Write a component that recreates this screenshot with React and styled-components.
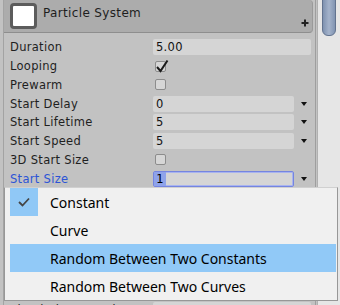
import React from "react";
import styled, { createGlobalStyle } from "styled-components";

const Global = createGlobalStyle`
  html, body { margin: 0; padding: 0; }
  body {
    width: 340px; height: 305px; overflow: hidden;
    background: #c2c2c2;
    font-family: "DejaVu Sans", "Liberation Sans", sans-serif;
  }
`;

const Page = styled.div`
  position: relative;
  display: flex;
  width: 340px;
  height: 305px;
  overflow: hidden;
  background: #c2c2c2;
`;

const Inspector = styled.div`
  display: flex;
  flex-direction: column;
  width: 313px;
  margin-left: 3px;
  border-left: 1px solid #a3a3a3;
  border-right: 1px solid #9e9e9e;
`;

const Header = styled.div`
  position: relative;
  display: flex;
  align-items: flex-start;
  height: 33px;
  flex: none;
  padding: 3px 0 0 6px;
  box-sizing: border-box;
  margin-right: 2px;
  background: #acacac;
  border-bottom: 1px solid #8e8e8e;
  border-right: 1px solid #9a9a9a;
  border-radius: 0 4px 4px 0;
`;

const IconBox = styled.div`
  width: 27px;
  height: 26px;
  box-sizing: border-box;
  border: 3px solid #5c5c5c;
  border-radius: 4px;
  background: #ffffff;
`;

const Title = styled.div`
  margin: 3px 0 0 6px;
  font-size: 12px;
  line-height: 14px;
  color: #1e1e1e;
  letter-spacing: 0.35px;
`;

const Plus = styled.svg`
  position: absolute;
  right: 3px;
  bottom: 5px;
`;

const Rows = styled.div`
  display: flex;
  flex-direction: column;
  padding-top: 5px;
`;

const Row = styled.div`
  display: flex;
  align-items: center;
  height: 18.75px;
  flex: none;
  padding-left: 6px;
  visibility: ${(p) => (p.$covered ? "hidden" : "visible")};
`;

const Label = styled.div`
  width: 143px;
  flex: none;
  font-size: 11.5px;
  letter-spacing: 0.3px;
  color: ${(p) => (p.$active ? "#2c54d6" : "#1f1f1f")};
  white-space: nowrap;
`;

const Field = styled.div`
  display: flex;
  align-items: center;
  box-sizing: border-box;
  width: ${(p) => (p.$wide ? "158px" : "141px")};
  height: 16px;
  padding-left: ${(p) => (p.$focus ? "0" : "3px")};
  background: #d5d5d5;
  border-radius: 2px;
  border: ${(p) => (p.$focus ? "1px solid #7585e0" : "none")};
  box-shadow: ${(p) => (p.$focus ? "inset 0 0 0 1px #a9b4ef" : "none")};
  font-size: 11.5px;
  letter-spacing: 0.3px;
  color: #111;
`;

const Selected = styled.span`
  display: inline-flex;
  align-items: center;
  justify-content: center;
  width: 12px;
  height: 14px;
  background: #8fa3ea;
  color: #000;
  font-size: 11.5px;
`;

const Arrow = styled.div`
  width: 0;
  height: 0;
  margin-left: 7px;
  border-left: 3.5px solid transparent;
  border-right: 3.5px solid transparent;
  border-top: 4px solid #111;
`;

const CheckBox = styled.div`
  position: relative;
  width: 11px;
  height: 11px;
  margin-left: 2px;
  box-sizing: border-box;
  border: 1px solid #8c8c8c;
  border-radius: 2px;
  background: #d6d6d6;
`;

const CheckMark = styled.svg`
  position: absolute;
  left: -1px;
  top: -3px;
`;

const Scrollbar = styled.div`
  display: flex;
  justify-content: center;
  width: 22px;
  margin-left: 1px;
  background: #e6e6e6;
  border-left: 1px solid #b0b0b0;
`;

const Thumb = styled.div`
  width: 14px;
  height: 40px;
  margin-top: -4px;
  box-sizing: border-box;
  border: 1px solid #62738f;
  border-radius: 0 0 6px 6px;
  background: linear-gradient(to right, #7f92b0, #a4b3cb 50%, #8194b2);
`;

const Popup = styled.div`
  position: absolute;
  left: 4px;
  top: 187px;
  width: 334px;
  height: 114px;
  box-sizing: border-box;
  padding: 0 1px 0 5px;
  background: #f0f0f0;
  border: 1px solid #979797;
  border-top-color: #d0d0d0;
  display: flex;
  flex-direction: column;
`;

const Item = styled.div`
  display: flex;
  align-items: center;
  height: 28px;
  flex: none;
  background: ${(p) => (p.$hover ? "#91c9f7" : "transparent")};
  font-family: "Noto Sans", "Liberation Sans", sans-serif;
  font-size: 14px;
  color: #000;
`;

const Tick = styled.div`
  display: flex;
  align-items: center;
  justify-content: center;
  width: 28px;
  height: 28px;
  flex: none;
  background: ${(p) => (p.$on ? "#90c8f6" : "transparent")};
`;

const ItemText = styled.span`
  margin-left: 12px;
  white-space: nowrap;
`;

const rows = [
  { label: "Duration", kind: "wide", value: "5.00" },
  { label: "Looping", kind: "check", on: true },
  { label: "Prewarm", kind: "check" },
  { label: "Start Delay", kind: "drop", value: "0" },
  { label: "Start Lifetime", kind: "drop", value: "5" },
  { label: "Start Speed", kind: "drop", value: "5" },
  { label: "3D Start Size", kind: "check" },
  { label: "Start Size", kind: "focus", value: "1" },
  { label: "3D Start Rotation", kind: "check", covered: true },
  { label: "Start Rotation", kind: "drop", value: "0", covered: true },
  { label: "Randomize Rotation", kind: "wide", value: "0", covered: true },
  { label: "Start Color", kind: "wide", value: "", covered: true },
  { label: "Gravity Modifier", kind: "drop", value: "0", covered: true },
  { label: "Simulation Space", kind: "wide", value: "Local", covered: true },
  { label: "Simulation Speed", kind: "wide", value: "1" },
];

const items = [
  { text: "Constant", on: true },
  { text: "Curve" },
  { text: "Random Between Two Constants", hover: true },
  { text: "Random Between Two Curves" },
];

function Value({ row }) {
  if (row.kind === "check") {
    return (
      <CheckBox>
        {row.on && (
          <CheckMark width="14" height="14" viewBox="0 0 14 14">
            <path d="M2 8 L5.5 12 L12.5 1.5" fill="none" stroke="#1a1a1a" strokeWidth="2" />
          </CheckMark>
        )}
      </CheckBox>
    );
  }
  if (row.kind === "focus") {
    return (
      <>
        <Field $focus>
          <Selected>{row.value}</Selected>
        </Field>
        <Arrow />
      </>
    );
  }
  return (
    <>
      <Field $wide={row.kind === "wide"}>{row.value}</Field>
      {row.kind === "drop" && <Arrow />}
    </>
  );
}

export default function App() {
  return (
    <Page>
      <Global />
      <Inspector>
        <Header>
          <IconBox />
          <Title>Particle System</Title>
          <Plus width="8" height="8" viewBox="0 0 8 8">
            <path d="M4 0.5 V7.5 M0.5 4 H7.5" stroke="#222" strokeWidth="2" />
          </Plus>
        </Header>
        <Rows>
          {rows.map((r) => (
            <Row key={r.label} $covered={r.covered}>
              <Label $active={r.kind === "focus"}>{r.label}</Label>
              <Value row={r} />
            </Row>
          ))}
        </Rows>
      </Inspector>
      <Scrollbar>
        <Thumb />
      </Scrollbar>
      <Popup>
        {items.map((it) => (
          <Item key={it.text} $hover={it.hover}>
            <Tick $on={it.on}>
              {it.on && (
                <svg width="12" height="10" viewBox="0 0 12 10">
                  <path d="M1 5 L4.5 8.5 L11 1.5" fill="none" stroke="#444" strokeWidth="1.8" />
                </svg>
              )}
            </Tick>
            <ItemText>{it.text}</ItemText>
          </Item>
        ))}
      </Popup>
    </Page>
  );
}
